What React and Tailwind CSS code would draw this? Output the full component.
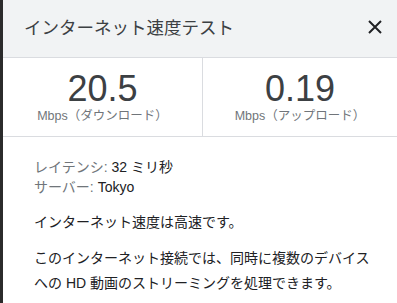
export default function App() {
  return (
    <div className="flex h-[303px] w-[397px] overflow-hidden bg-[#2b2b2b] font-['Liberation_Sans','Noto_Sans_CJK_JP',sans-serif]">
      <div className="ml-[3px] flex flex-1 flex-col bg-white">
        {/* ヘッダー */}
        <div className="flex h-[58px] items-center justify-between border-b border-[#dadce0] bg-[#f1f3f4] pl-[21px] pr-[14px]">
          <span className="text-[17.5px] text-[#3c4043]">インターネット速度テスト</span>
          <svg width="16" height="16" viewBox="0 0 16 16" className="mb-[4px]">
            <path d="M2 2 L14 14 M14 2 L2 14" stroke="#202124" strokeWidth="2" />
          </svg>
        </div>

        {/* 速度 */}
        <div className="flex h-[79px] border-b border-[#dadce0]">
          <div className="flex w-[200px] flex-col items-center border-r border-[#dadce0] pt-[11px]">
            <span className="text-[36px] leading-[40px] text-[#3c4043]">20.5</span>
            <span className="mt-[-1px] text-[12.5px] leading-[16px] text-[#70757a]">Mbps（ダウンロード）</span>
          </div>
          <div className="flex flex-1 flex-col items-center pt-[11px]">
            <span className="text-[36px] leading-[40px] text-[#3c4043]">0.19</span>
            <span className="mt-[-1px] text-[12.5px] leading-[16px] text-[#70757a]">Mbps（アップロード）</span>
          </div>
        </div>

        {/* 詳細 */}
        <div className="flex flex-col pl-[31px] pr-[20px] pt-[20px] text-[14px] text-[#202124]">
          <div className="leading-[20px]">
            <span className="text-[#70757a]">レイテンシ: </span>32 ミリ秒
          </div>
          <div className="leading-[20px]">
            <span className="text-[#70757a]">サーバー: </span>Tokyo
          </div>
          <p className="mt-[15px] leading-[20px]">インターネット速度は高速です。</p>
          <p className="mt-[14px] leading-[25px]">
            このインターネット接続では、同時に複数のデバイスへの HD 動画のストリーミングを処理できます。
          </p>
        </div>
      </div>
    </div>
  )
}
